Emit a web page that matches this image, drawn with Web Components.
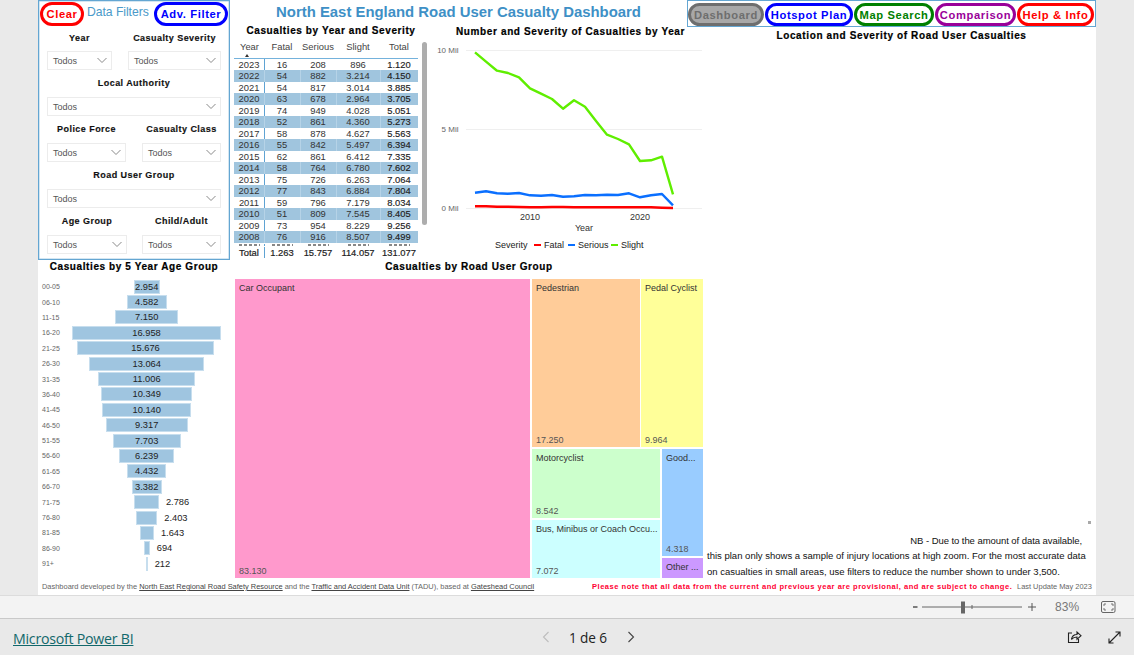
<!DOCTYPE html>
<html lang="en"><head><meta charset="utf-8"><title>North East England Road User Casualty Dashboard</title>
<style>
html,body{margin:0;padding:0;height:100%;background:#eaeaea;overflow:hidden;font-family:"Liberation Sans",Arial,sans-serif}
body{display:flex;flex-direction:column;width:1134px;height:655px}
</style></head><body>
<pbi-report></pbi-report>
<pbi-zoombar></pbi-zoombar>
<pbi-pagebar></pbi-pagebar>
<script>
const T='font-family:"Liberation Sans",Arial,sans-serif;';
const titleCss=`.title{${T}font-weight:700;font-size:10px;line-height:10px;letter-spacing:.6px;-webkit-text-stroke:.2px #000;color:#000;text-align:center;white-space:nowrap}`;
class Base extends HTMLElement{
  render(html){ if(!this.shadowRoot) this.attachShadow({mode:'open'}); this.shadowRoot.innerHTML=html; }
}
class PbiPill extends Base{connectedCallback(){
  const c=this.getAttribute('color'),w=this.getAttribute('w'),f=this.getAttribute('fill')||'#fff',h=this.getAttribute('h')||23;
  this.render(`<style>:host{display:flex;flex:none;box-sizing:border-box;width:${w}px;height:${h}px;border:3px solid ${c};border-radius:12px;background:${f};color:${c};align-items:center;justify-content:center;${T}font-weight:700;font-size:11.2px;letter-spacing:.62px;white-space:nowrap;overflow:visible}</style><slot></slot>`);
}}
class PbiSlicer extends Base{connectedCallback(){
  const w=this.getAttribute('w');
  this.render(`<style>:host{display:flex;flex-direction:column;width:${w}px;${T}}
  .l{box-sizing:border-box;height:26px;padding-bottom:${this.hasAttribute('first')?1:2}px;display:flex;align-items:center;justify-content:center;font-weight:700;font-size:9px;letter-spacing:.45px;-webkit-text-stroke:.15px #111;color:#111;white-space:nowrap}
  .d{box-sizing:border-box;height:19px;border:1px solid #ececec;display:flex;align-items:center;justify-content:space-between;padding:0 3px 0 5px;font-size:9px;color:#555}
  svg{display:block}</style>
  <div class="l">${this.getAttribute('label')}</div>
  <div class="d"><span>Todos</span><svg width="12" height="7" viewBox="0 0 12 7"><path d="M1.5 1 6 5.5 10.5 1" fill="none" stroke="#8a8a8a" stroke-width="1"/></svg></div>`);
}}
class PbiFilters extends Base{connectedCallback(){
  this.render(`<style>:host{display:flex;flex-direction:column;box-sizing:border-box;width:192px;height:260px;border:1px solid #64a6d2;box-shadow:inset 0 0 0 .5px #a8cde6;padding:0 8px;${T}}
  .top{display:flex;align-items:center;height:24px;margin:0 -7px;padding-top:1px;box-sizing:border-box;flex:none}
  .df{font-size:12.2px;color:#4b9ac9;margin:-3px 0 0 3px;width:68.5px;white-space:nowrap;letter-spacing:-.05px}
  .r{display:flex;justify-content:space-between;margin-bottom:1px;flex:none}</style>
  <div class="top"><pbi-pill color="#ff0000" w="44" h="24">Clear</pbi-pill><span class="df">Data Filters</span><pbi-pill color="#0000ff" w="74" h="24">Adv. Filter</pbi-pill></div>
  <div class="r"><pbi-slicer first label="Year" w="65"></pbi-slicer><pbi-slicer first label="Casualty Severity" w="93"></pbi-slicer></div>
  <div class="r"><pbi-slicer label="Local Authority" w="174"></pbi-slicer></div>
  <div class="r"><pbi-slicer label="Police Force" w="79"></pbi-slicer><pbi-slicer label="Casualty Class" w="79"></pbi-slicer></div>
  <div class="r"><pbi-slicer label="Road User Group" w="174"></pbi-slicer></div>
  <div class="r"><pbi-slicer label="Age Group" w="80"></pbi-slicer><pbi-slicer label="Child/Adult" w="79"></pbi-slicer></div>`);
}}
class PbiTable extends Base{connectedCallback(){
  const rows=[[2023,16,208,896,'1.120'],[2022,54,882,'3.214','4.150'],[2021,54,817,'3.014','3.885'],[2020,63,678,'2.964','3.705'],[2019,74,949,'4.028','5.051'],[2018,52,861,'4.360','5.273'],[2017,58,878,'4.627','5.563'],[2016,55,842,'5.497','6.394'],[2015,62,861,'6.412','7.335'],[2014,58,764,'6.780','7.602'],[2013,75,726,'6.263','7.064'],[2012,77,843,'6.884','7.804'],[2011,59,796,'7.179','8.034'],[2010,51,809,'7.545','8.405'],[2009,73,954,'8.229','9.256'],[2008,76,916,'8.507','9.499']];
  const cells=(r)=>r.map(v=>`<span>${v}</span>`).join('');
  this.render(`<style>${titleCss}
  :host{display:flex;flex-direction:column;height:100%;${T}font-size:9.4px;color:#333}
  .wrap{display:flex;flex:none;padding-left:2px}
  .tb{width:184px}
  .g{display:grid;grid-template-columns:30px 36px 36px 44px 38px;text-align:center}
  .g span:first-child{border-right:1px solid #5fa3d3;margin-right:-1px}
  .h{border-bottom:1px solid #74b2dc;height:21.5px;line-height:12px;color:#444;align-items:start}
  .h span{padding-top:5px}
  .h span:first-child{border:0}
  .arrow{display:block;width:0;height:0;border:2.5px solid transparent;border-bottom:3px solid #333;border-top:0;margin:0 auto;transform:translate(-3px,1px)}
  .body{height:188px;overflow:hidden}
  .row{height:11.53px;line-height:11.53px}
  .row.s{background:#a0c5de}
  .row.s span+span{box-shadow:inset 1px 0 0 #b6d3e7}
  .row span:last-child{color:#222;-webkit-text-stroke:.15px #222}
  .cut{height:3.5px;padding-top:1.5px;box-sizing:border-box}
  .cut i{display:block;height:2px;width:21px;margin:0 auto;background:repeating-linear-gradient(90deg,#888 0 3px,transparent 3px 5px)}
  .cut span{display:block}
  .tot{height:11px;line-height:11px;color:#222;-webkit-text-stroke:.2px #222}
  .sb{width:5px;height:183px;margin:6px 0 0 4px;border-radius:3px;background:#adadad;flex:none}</style>
  <div class="title">Casualties by Year and Severity</div>
  <div class="wrap"><div class="tb">
    <div class="g h"><span>Year<i class="arrow"></i></span><span>Fatal</span><span>Serious</span><span>Slight</span><span>Total</span></div>
    <div class="body">${rows.map((r,i)=>`<div class="g row${i%2?' s':''}">${cells(r)}</div>`).join('')}<div class="g cut">${'<span><i></i></span>'.repeat(5)}</div></div>
    <div class="g tot">${cells(['Total','1.263','15.757','114.057','131.077'])}</div>
  </div><div class="sb"></div></div>`);
}}
class PbiLine extends Base{connectedCallback(){
  const X=i=>(475+i*11).toFixed(1);
  const g=[157,185,212,219,232,265,281,297,326,301,320,363,404,417,433,483,481,470,583];
  const b=[578,574,580,581,579,586,587,585,590,589,585,586,584,585,580,592,586,582,616];
  const r=[619,619,620,620,621,622,622,621,621,622,622,622,622,622,622,622,622,623,624];
  const P=a=>a.map((y,i)=>X(i)+','+(y/3).toFixed(1)).join(' ');
  this.render(`<style>${titleCss}:host{display:flex;flex-direction:column;height:100%}
  .title{margin:1px 0 0 0;padding-left:7px;letter-spacing:.63px}
  svg{display:block;flex:none}text{${T}}</style>
  <div class="title">Number and Severity of Casualties by Year</div>
  <svg width="274" height="225" viewBox="430 37 274 225">
   <g stroke="#efefef" stroke-width="1"><path d="M466 50.5H702M466 129.5H702M466 208.5H702"/></g>
   <g font-size="8" fill="#666" text-anchor="end"><text x="458.5" y="53">10 Mil</text><text x="458.5" y="132">5 Mil</text><text x="458.5" y="211">0 Mil</text></g>
   <g font-size="9" fill="#333" text-anchor="middle"><text x="530" y="220">2010</text><text x="640" y="220">2020</text><text x="584" y="231">Year</text></g>
   <polyline points="${P(g)}" fill="none" stroke="#5fee00" stroke-width="2.4" stroke-linejoin="round"/>
   <polyline points="${P(b)}" fill="none" stroke="#0a6fff" stroke-width="2.4" stroke-linejoin="round"/>
   <polyline points="${P(r)}" fill="none" stroke="#ff0000" stroke-width="2.4" stroke-linejoin="round"/>
   <g font-size="9" fill="#222"><text x="495" y="248">Severity</text><text x="544" y="248">Fatal</text><text x="578" y="248">Serious</text><text x="621" y="248">Slight</text></g>
   <path d="M534 245h7" stroke="#f00" stroke-width="2"/><path d="M568 245h7" stroke="#0a6fff" stroke-width="2"/><path d="M611 245h7" stroke="#5fee00" stroke-width="2"/>
  </svg>`);
}}
class PbiFunnel extends Base{connectedCallback(){
  const d=[['00-05','2.954'],['06-10','4.582'],['11-15','7.150'],['16-20','16.958'],['21-25','15.676'],['26-30','13.064'],['31-35','11.006'],['36-40','10.349'],['41-45','10.140'],['46-50','9.317'],['51-55','7.703'],['56-60','6.239'],['61-65','4.432'],['66-70','3.382'],['71-75','2.786'],['76-80','2.403'],['81-85','1.643'],['86-90','694'],['91+','212']];
  const num=s=>+s.replace('.','');
  const row=([a,v])=>{const n=num(v),w=Math.max(2,n*149/16958),inn=n>=2900;
    return `<div class="r"><span class="a">${a}</span><div class="t"><i></i><div class="b" style="width:${w.toFixed(1)}px">${inn?v:''}</div><span class="o">${inn?'':v}</span></div></div>`};
  this.render(`<style>${titleCss}:host{display:block;${T}}
  .title{height:17px;padding-right:2px}
  .r{display:flex;height:15.4px;padding-left:4px;align-items:center}
  .a{width:30px;font-size:7px;color:#666;flex:none}
  .t{width:149.4px;display:grid;grid-template-columns:1fr auto 1fr;align-items:center;font-size:9.3px;color:#222;white-space:nowrap}
  .b{box-sizing:border-box;height:14px;background:#9fc5e0;border:1px solid #c7deee;line-height:12px;text-align:center;color:#222}
  .o{padding-left:7px;width:0}</style>
  <div class="title">Casualties by 5 Year Age Group</div>${d.map(row).join('')}`);
}}
class TmCell extends Base{connectedCallback(){
  const w=this.getAttribute('w'),h=this.getAttribute('h');
  this.render(`<style>:host{display:flex;flex-direction:column;justify-content:space-between;box-sizing:border-box;overflow:hidden;width:${w}px;height:${h}px;background:${this.getAttribute('bg')};padding:3px 3px 1px 4px;${T}font-size:9px;white-space:nowrap;color:#333;flex-shrink:0}
  .v{color:#555;line-height:11px}.n{line-height:12px}</style><div class="n">${this.getAttribute('name')}</div><div class="v">${this.getAttribute('value')||''}</div>`);
}}
class PbiTreemap extends Base{connectedCallback(){
  this.render(`<style>${titleCss}:host{display:block}
  .title{height:17px;padding-left:2px}
  .m{display:flex;gap:2px;height:299px;margin-left:3px;width:468px}
  .c{display:flex;flex-direction:column;gap:2px;flex:none}.r{display:flex;gap:2px;flex:none}.r.top{gap:1px}</style>
  <div class="title">Casualties by Road User Group</div>
  <div class="m">
   <tm-cell w="295" h="298.5" bg="#ff99cc" name="Car Occupant" value="83.130"></tm-cell>
   <div class="c" style="width:171px">
     <div class="r top"><tm-cell w="108" h="168" bg="#ffcc99" name="Pedestrian" value="17.250"></tm-cell><tm-cell w="62" h="168" bg="#ffff99" name="Pedal Cyclist" value="9.964"></tm-cell></div>
     <div class="r">
       <div class="c" style="width:128px"><tm-cell w="128" h="69" bg="#ccffcc" name="Motorcyclist" value="8.542"></tm-cell><tm-cell w="128" h="57.5" bg="#ccffff" name="Bus, Minibus or Coach Occu..." value="7.072"></tm-cell></div>
       <div class="c" style="width:41px"><tm-cell w="41" h="107" bg="#99ccff" name="Good..." value="4.318"></tm-cell><tm-cell w="41" h="19.5" bg="#cc99ff" name="Other ..."></tm-cell></div>
     </div>
   </div>
  </div>`);
}}
class PbiMap extends Base{connectedCallback(){
  this.render(`<style>${titleCss}:host{display:flex;flex-direction:column;height:100%;${T}}
  .title{padding-top:5px;padding-left:3px;letter-spacing:.63px}
  .sp{flex:1}
  .dot{align-self:flex-end;width:3px;height:3px;background:#a9a9a9;margin:0 5px 9px 0}
  .n{font-size:9.53px;color:#111;white-space:nowrap;padding-left:3px;margin-bottom:-2.5px}
  .n div{height:16.5px;line-height:16.5px}
  .n .a{height:15px;line-height:15px;text-align:right;padding-right:14px;letter-spacing:-.07px}</style>
  <div class="title">Location and Severity of Road User Casualties</div>
  <div class="sp"></div><div class="dot"></div>
  <div class="n"><div class="a">NB - Due to the amount of data available,</div><div>this plan only shows a sample of injury locations at high zoom. For the most accurate data</div><div>on casualties in small areas, use filters to reduce the number shown to under 3,500.</div></div>`);
}}
class PbiFootnote extends Base{connectedCallback(){
  this.render(`<style>:host{display:flex;align-items:center;height:100%;padding:0 5px 0 4px;box-sizing:border-box;${T}font-size:7.44px;color:#666;white-space:nowrap}
  u{color:#444}.l{width:550px;flex:none}.red{font-size:7.55px;color:#ff0033;font-weight:700;letter-spacing:.5px;width:425px;flex:none}.r{margin-left:auto}</style>
  <span class="l">Dashboard developed by the <u>North East Regional Road Safety Resource</u> and the <u>Traffic and Accident Data Unit</u> (TADU), based at <u>Gateshead Council</u></span>
  <span class="red">Please note that all data from the current and previous year are provisional, and are subject to change.</span>
  <span class="r">Last Update May 2023</span>`);
}}
class PbiNav extends Base{connectedCallback(){
  this.render(`<style>:host{display:flex;box-sizing:border-box;height:27px;border:1px solid #64a6d2;padding:2px 2px 0 0;gap:1px;align-items:flex-start}</style>
  <pbi-pill color="#6e6e6e" fill="#a8a8a8" w="76">Dashboard</pbi-pill><pbi-pill color="#0000ff" w="88">Hotspot Plan</pbi-pill><pbi-pill color="#008000" w="80">Map Search</pbi-pill><pbi-pill color="#990099" w="81">Comparison</pbi-pill><pbi-pill color="#ff0000" w="77">Help &amp; Info</pbi-pill>`);
}}
class PbiReport extends Base{connectedCallback(){
  this.render(`<style>:host{display:block;flex:none;box-sizing:border-box;margin-left:38px;width:1058px;height:595px;background:#fff}
  .g{display:grid;height:100%;grid-template-columns:194px 198px 257px 17px 392px;grid-template-rows:26px 236px 316px 17px}
  .h1{grid-column:2/4;grid-row:1;${T}font-weight:700;font-size:14.9px;color:#3e90c6;text-align:center;line-height:24px;white-space:nowrap;padding-right:2px}
  .f{grid-column:1;grid-row:1/3}.nav{grid-column:4/6;grid-row:1}.t{grid-column:2;grid-row:2}.l{grid-column:3/5;grid-row:2}.m{grid-column:5;grid-row:2/4}.a{grid-column:1;grid-row:3}.tm{grid-column:2/5;grid-row:3}.fn{grid-column:1/6;grid-row:4}</style>
  <div class="g">
   <pbi-filters class="f"></pbi-filters><div class="h1">North East England Road User Casualty Dashboard</div><pbi-nav class="nav"></pbi-nav>
   <pbi-table class="t"></pbi-table><pbi-line class="l"></pbi-line><pbi-map class="m"></pbi-map>
   <pbi-funnel class="a"></pbi-funnel><pbi-treemap class="tm"></pbi-treemap><pbi-footnote class="fn"></pbi-footnote>
  </div>`);
}}
class PbiZoombar extends Base{connectedCallback(){
  this.render(`<style>:host{display:flex;flex:none;box-sizing:border-box;height:24px;background:#f3f3f3;border-top:1px solid #dcdcdc;border-bottom:1px solid #c9c9c9;align-items:center;padding-left:913px;${T};color:#666}
  svg{display:block;flex:none}.p{font-size:12px;width:23px;margin-left:19px;letter-spacing:.1px;color:#777}</style>
  <svg width="123" height="14" viewBox="0 0 123 14"><path d="M0 7h4.5" stroke="#555" stroke-width="1.5"/><path d="M9 7h100" stroke="#666" stroke-width="1"/><rect x="48" y="1.5" width="4" height="12" fill="#666"/><path d="M59 5v4" stroke="#666"/><path d="M115 7h8M119 3v8" stroke="#555" stroke-width="1"/></svg>
  <span class="p">83%</span>
  <svg style="margin-left:23px" width="15" height="12" viewBox="0 0 15 12"><rect x=".5" y=".5" width="13.5" height="11" rx="1.5" fill="none" stroke="#666"/><path d="M3 5V3h2M10 3h2v2M3 7v2h2M12 7v2h-2" fill="none" stroke="#666" stroke-width=".9"/></svg>`);
}}
class PbiPagebar extends Base{connectedCallback(){
  this.render(`<style>:host{display:flex;flex:1;background:#e9e9e9;align-items:center;font-family:"Open Sans","Noto Sans",sans-serif}
  a{color:#12686b;font-size:14.2px;margin:2px 0 0 13px;width:529px;flex:none;letter-spacing:-.25px;text-decoration:underline;white-space:nowrap}
  svg{display:block;flex:none}.pg{font-size:13.6px;color:#222;width:39px;margin:0 19px;white-space:nowrap;letter-spacing:-.1px}</style>
  <a>Microsoft Power BI</a>
  <svg width="8" height="12" viewBox="0 0 8 12"><path d="M6.5 1 1.5 6l5 5" fill="none" stroke="#bdbdbd" stroke-width="1.1"/></svg>
  <span class="pg">1 de 6</span>
  <svg width="8" height="12" viewBox="0 0 8 12"><path d="M1.5 1l5 5-5 5" fill="none" stroke="#444" stroke-width="1.1"/></svg>
  <svg style="margin-left:432px" width="15" height="14" viewBox="0 0 15 14"><path d="M5 3H1.5v9.5h10V9" fill="none" stroke="#222" stroke-width="1.1"/><path d="M4.5 9.5C5 6 7.5 4.5 10 4.5V2l4 3.7-4 3.6V7C8 7 6 7.5 4.5 9.5Z" fill="none" stroke="#222" stroke-width="1.1"/></svg>
  <svg style="margin-left:26px" width="13" height="13" viewBox="0 0 13 13"><path d="M1 12 12 1M7.5 1H12v4.5M1 7.5V12h4.5" fill="none" stroke="#222" stroke-width="1.1"/></svg>`);
}}
const defs={'pbi-pill':PbiPill,'pbi-slicer':PbiSlicer,'pbi-filters':PbiFilters,'pbi-table':PbiTable,'pbi-line':PbiLine,'pbi-funnel':PbiFunnel,'tm-cell':TmCell,'pbi-treemap':PbiTreemap,'pbi-map':PbiMap,'pbi-footnote':PbiFootnote,'pbi-nav':PbiNav,'pbi-report':PbiReport,'pbi-zoombar':PbiZoombar,'pbi-pagebar':PbiPagebar};
for(const k in defs) customElements.define(k,defs[k]);
</script>
</body></html>
